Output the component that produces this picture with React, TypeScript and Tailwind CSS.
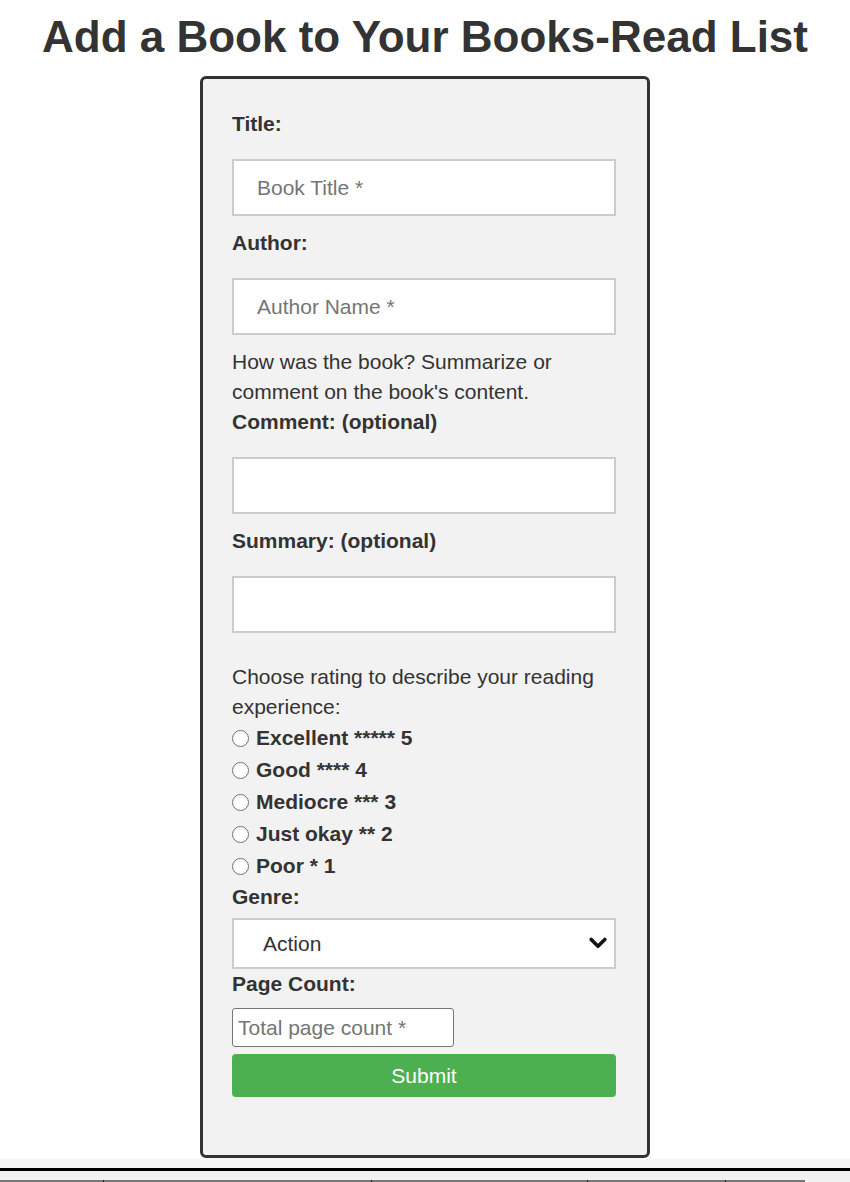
import type { ReactNode } from "react";

const RATINGS = [
  { value: "5", label: "Excellent ***** 5" },
  { value: "4", label: "Good **** 4" },
  { value: "3", label: "Mediocre *** 3" },
  { value: "2", label: "Just okay ** 2" },
  { value: "1", label: "Poor * 1" },
];

const GENRES = ["Action", "Biography", "Fantasy", "History", "Mystery", "Romance", "Science Fiction"];

function Label({ children, htmlFor }: { children: ReactNode; htmlFor?: string }) {
  return (
    <label htmlFor={htmlFor} className="block font-bold leading-[30px]">
      {children}
    </label>
  );
}

function TextField({ id, placeholder }: { id: string; placeholder?: string }) {
  return (
    <input
      id={id}
      type="text"
      placeholder={placeholder}
      className="mt-[20px] mb-[12px] block h-[57px] w-[384px] border-2 border-[#cccccc] bg-white pl-[23px] text-[21px] text-[#333] outline-none placeholder:text-[#757575]"
    />
  );
}

export default function App() {
  return (
    <div className="min-h-screen bg-white font-['Liberation_Sans',Arial,sans-serif] text-[#333]">
      <h1 className="mt-[12px] mb-[14px] text-center text-[44px] font-bold leading-[50px]">
        Add a Book to Your Books-Read List
      </h1>

      <form
        className="mx-auto w-[450px] rounded-[6px] border-[3px] border-[#333] bg-[#f2f2f2] pt-[30px] pb-[58px] pl-[29px] pr-[31px] text-[21px] leading-[30px]"
        onSubmit={(e) => e.preventDefault()}
      >
        <Label htmlFor="title">Title:</Label>
        <TextField id="title" placeholder="Book Title *" />

        <Label htmlFor="author">Author:</Label>
        <TextField id="author" placeholder="Author Name *" />

        <p>How was the book? Summarize or comment on the book's content.</p>
        <Label htmlFor="comment">Comment: (optional)</Label>
        <TextField id="comment" />

        <Label htmlFor="summary">Summary: (optional)</Label>
        <TextField id="summary" />

        <p className="mt-[29px]">Choose rating to describe your reading experience:</p>
        <div>
          {RATINGS.map((r) => (
            <label key={r.value} className="flex h-[32px] items-center font-bold">
              <input
                type="radio"
                name="rating"
                value={r.value}
                className="mr-[7px] h-[17px] w-[17px] shrink-0 appearance-none rounded-full border border-[#6f6f6f] bg-white"
              />
              {r.label}
            </label>
          ))}
        </div>

        <Label htmlFor="genre">Genre:</Label>
        <div className="relative mt-[6px] w-[384px]">
          <select
            id="genre"
            defaultValue="Action"
            className="block h-[51px] w-full appearance-none rounded-none border-2 border-[#cccccc] bg-white pl-[29px] text-[21px] text-[#333] outline-none"
          >
            {GENRES.map((g) => (
              <option key={g}>{g}</option>
            ))}
          </select>
          <svg
            className="pointer-events-none absolute right-[9px] top-[19px]"
            width="18"
            height="13"
            viewBox="0 0 18 13"
            fill="none"
          >
            <path d="M2.2 2.5 L9 9.3 L15.8 2.5" stroke="#111" strokeWidth="3.6" strokeLinecap="round" strokeLinejoin="round" />
          </svg>
        </div>

        <Label htmlFor="pages">Page Count:</Label>
        <input
          id="pages"
          type="text"
          placeholder="Total page count *"
          className="mt-[9px] block h-[39px] w-[222px] rounded-[3px] border border-[#767676] bg-white pl-[5px] text-[21px] text-[#333] outline-none placeholder:text-[#757575]"
        />

        <button
          type="submit"
          className="mt-[7px] block h-[43px] w-[384px] rounded-[4px] bg-[#4caf50] text-[21px] text-white"
        >
          Submit
        </button>
      </form>

      <div className="h-[10px] bg-[#f6f7f9]" />
      <div className="h-[3px] bg-black" />
      <div className="h-[9px] bg-[#f1f1f1]" />
      <div className="flex bg-[#f1f1f1]">
        <div className="h-[2px] w-[103px] bg-[#777]" />
        <div className="h-[2px] w-[268px] border-l border-[#222] bg-[#777]" />
        <div className="h-[2px] w-[216px] border-l border-[#222] bg-[#777]" />
        <div className="h-[2px] w-[138px] border-l border-[#222] bg-[#777]" />
        <div className="h-[2px] w-[80px] border-l border-[#222] bg-[#777]" />
      </div>
    </div>
  );
}
